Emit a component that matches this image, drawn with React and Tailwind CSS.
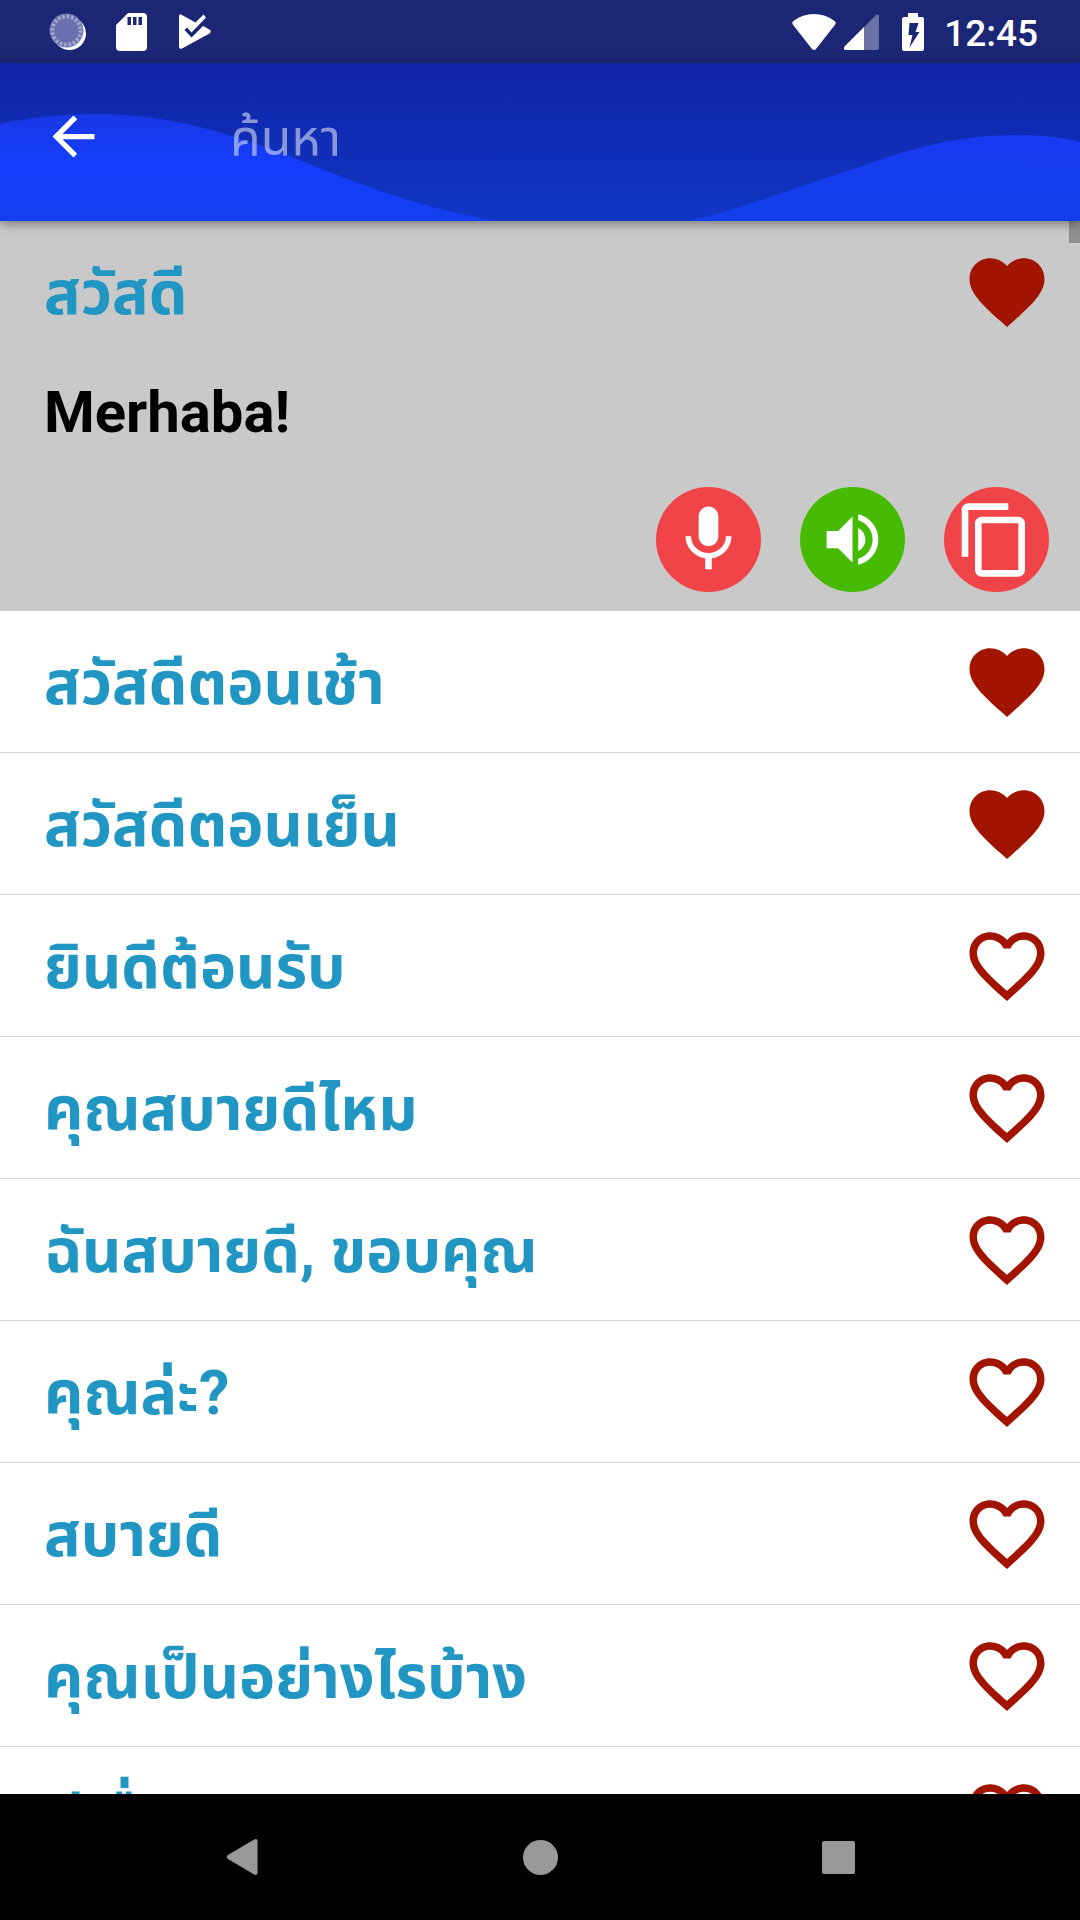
import React, { useState } from "react";

const PHRASES = [
  { text: "สวัสดีตอนเช้า", liked: true },
  { text: "สวัสดีตอนเย็น", liked: true },
  { text: "ยินดีต้อนรับ", liked: false },
  { text: "คุณสบายดีไหม", liked: false },
  { text: "ฉันสบายดี, ขอบคุณ", liked: false },
  { text: "คุณล่ะ?", liked: false },
  { text: "สบายดี", liked: false },
  { text: "คุณเป็นอย่างไรบ้าง", liked: false },
  { text: "มีเรื่อง", liked: false },
];

const HEART =
  "M12 21.35l-1.45-1.32C5.4 15.36 2 12.28 2 8.5 2 5.42 4.42 3 7.5 3c1.74 0 3.41.81 4.5 2.09C13.09 3.81 14.76 3 16.5 3 19.58 3 22 5.42 22 8.5c0 3.78-3.4 6.86-8.55 11.54L12 21.35z";
const HEART_OUTLINE =
  "M16.5 3c-1.74 0-3.41.81-4.5 2.09C10.91 3.81 9.24 3 7.5 3 4.42 3 2 5.42 2 8.5c0 3.78 3.4 6.86 8.55 11.54L12 21.35l1.45-1.32C18.6 15.36 22 12.28 22 8.5 22 5.42 19.58 3 16.5 3zm-4.4 15.55l-.1.1-.1-.1C7.14 14.24 4 11.39 4 8.5 4 6.5 5.5 5 7.5 5c1.54 0 3.04.99 3.57 2.36h1.87C13.46 5.99 14.96 5 16.5 5c2 0 3.5 1.5 3.5 3.5 0 2.89-3.14 5.74-7.9 10.05z";
const MIC =
  "M12 14c1.66 0 2.99-1.34 2.99-3L15 5c0-1.66-1.34-3-3-3S9 3.34 9 5v6c0 1.66 1.34 3 3 3zm5.3-3c0 3-2.54 5.1-5.3 5.1S6.7 14 6.7 11H5c0 3.41 2.72 6.23 6 6.72V21h2v-3.28c3.28-.48 6-3.3 6-6.72h-1.7z";
const VOLUME =
  "M3 9v6h4l5 5V4L7 9H3zm13.5 3c0-1.77-1.02-3.29-2.5-4.03v8.05c1.48-.73 2.5-2.25 2.5-4.02zM14 3.23v2.06c2.89.86 5 3.54 5 6.71s-2.11 5.85-5 6.71v2.06c4.01-.91 7-4.49 7-8.77s-2.99-7.86-7-8.77z";
const COPY =
  "M16 1H4c-1.1 0-2 .9-2 2v14h2V3h12V1zm3 4H8c-1.1 0-2 .9-2 2v14c0 1.1.9 2 2 2h11c1.1 0 2-.9 2-2V7c0-1.1-.9-2-2-2zm0 16H8V7h11v14z";
const ARROW_BACK = "M20 11H7.83l5.59-5.59L12 4l-8 8 8 8 1.41-1.41L7.83 13H20v-2z";

function Icon({ d, className }) {
  return (
    <svg viewBox="0 0 24 24" fill="currentColor" className={className} aria-hidden="true">
      <path d={d} />
    </svg>
  );
}

function StatusBar() {
  return (
    <div className="flex h-[63px] shrink-0 items-center justify-between bg-[#1b2675] pr-[42px] pl-[49px] text-white">
      <div className="flex items-center">
        <svg viewBox="0 0 38 38" className="h-[38px] w-[38px]" aria-hidden="true">
          <circle cx="20.500" cy="20.500" r="16.500" fill="#fff" />
          <circle cx="17.500" cy="17.500" r="17" fill="#7379b3" />
          <circle cx="17.500" cy="17.500" r="14" fill="none" stroke="#a9add2" strokeWidth="4" strokeDasharray="2 2.4" />
          <circle cx="17.500" cy="17.500" r="12" fill="#6a70ae" />
        </svg>
        <svg viewBox="0 0 31 38" className="ml-[29px] h-[38px] w-[31px]" aria-hidden="true">
          <path
            fill="#fff"
            fillRule="evenodd"
            d="M12 0H27a4 4 0 0 1 4 4V34a4 4 0 0 1-4 4H4a4 4 0 0 1-4-4V12zM11.500 4v8h3.500V4zM17 4v8h3.500V4zM22.500 4v8H26V4z"
          />
        </svg>
        <svg viewBox="0 0 32 35" className="ml-8 h-[35px] w-8" aria-hidden="true">
          <path
            fill="#fff"
            d="M0 2Q0-.5 2.500.700L16.500 8.500 24.500.500 27 3.500 12.500 18.500 8 13.500 5.500 16 12.500 23.500 24 12 30.500 15.500Q33 17.500 30.500 19.500L3 34.500Q0 35.500 0 33z"
          />
        </svg>
      </div>
      <div className="flex items-center">
        <svg viewBox="0 0 44 36" className="h-9 w-11" aria-hidden="true">
          <path fill="#fff" d="M.8 10.500Q-.5 8.500 1.500 7Q10.500 0 22 0T42.500 7Q44.500 8.500 43.200 10.500L24 35Q22 37 20 35z" />
        </svg>
        <svg viewBox="0 0 35 36" className="ml-2 h-9 w-[35px]" aria-hidden="true">
          <path fill="#fff" opacity=".35" d="M20 13L32 1Q35-.5 35 2V34Q35 36 33 36H20z" />
          <path fill="#fff" d="M20 13V36H2Q-1 36 .5 32.500z" />
        </svg>
        <svg viewBox="0 0 22 38" className="ml-[23px] h-[38px] w-[22px]" aria-hidden="true">
          <path
            fill="#fff"
            fillRule="evenodd"
            d="M6 0H16V4H20Q22 4 22 6V36Q22 38 20 38H2Q0 38 0 36V6Q0 4 2 4H6zM7.500 10L6.500 22H10.500L7.500 34.500 17.500 19H13.500L16.500 10z"
          />
        </svg>
        <span className="ml-5 pt-1 text-[37px] leading-none font-medium">12:45</span>
      </div>
    </div>
  );
}

function Header() {
  return (
    <header className="relative z-10 shrink-0 bg-linear-to-b from-[#1024a6] to-[#1036c4] pb-[11px] shadow-[0_3px_10px_rgba(0,0,0,0.4)]">
      <svg
        viewBox="0 0 1080 158"
        preserveAspectRatio="none"
        className="absolute inset-0 h-full w-full"
        aria-hidden="true"
      >
        <defs>
          <linearGradient id="waveLeft" x1="0" y1="0" x2="0" y2="1">
            <stop offset="0" stopColor="#1838e4" />
            <stop offset="0.5" stopColor="#153dfc" />
            <stop offset="1" stopColor="#133fee" />
          </linearGradient>
          <linearGradient id="waveRight" x1="0" y1="0" x2="0" y2="1">
            <stop offset="0" stopColor="#183af2" />
            <stop offset="1" stopColor="#113fe6" />
          </linearGradient>
        </defs>
        <path fill="url(#waveLeft)" d="M0 61C30 54 65 51 100 51C165 52 215 65 289 93C350 117 410 143 496 158H0z" />
        <path fill="url(#waveRight)" d="M688 158C760 141 800 122 860 104C915 83 965 72 1019 72C1042 72 1060 74 1080 79V158z" />
      </svg>
      <div className="relative flex h-[147px] items-center pl-[42px]">
        <button type="button" aria-label="Back" className="text-white">
          <Icon d={ARROW_BACK} className="h-[63px] w-[63px]" />
        </button>
        <input
          type="search"
          aria-label="ค้นหา"
          placeholder="ค้นหา"
          className="ml-[125px] min-w-0 flex-1 bg-transparent pt-1 text-[50px] text-white outline-none placeholder:text-white/50"
        />
      </div>
    </header>
  );
}

function PhraseRow({ text, initial }) {
  const [liked, setLiked] = useState(initial);
  return (
    <div className="flex h-[141px] items-center justify-between pr-7 pl-11">
      <p className="pt-1 text-[61px] leading-none font-bold text-[#2196c3]">{text}</p>
      <button
        type="button"
        aria-label="Favorite"
        aria-pressed={liked}
        onClick={() => setLiked(!liked)}
        className="shrink-0 text-[#a01400]"
      >
        <Icon d={liked ? HEART : HEART_OUTLINE} className="h-[90px] w-[90px]" />
      </button>
    </div>
  );
}

function RoundButton({ label, d, color, size }) {
  return (
    <button
      type="button"
      aria-label={label}
      className={`flex h-[105px] w-[105px] items-center justify-center rounded-full text-white ${color}`}
    >
      <Icon d={d} className={size} />
    </button>
  );
}

function NavBar() {
  return (
    <nav className="flex h-[126px] shrink-0 items-center justify-center gap-[234px] bg-black text-[#999]">
      <button type="button" aria-label="Back" className="flex w-16 justify-center">
        <svg viewBox="0 0 32 37" className="h-9 w-8" fill="currentColor" aria-hidden="true">
          <path d="M28.500.500Q32-1 32 2.500V34.500Q32 38 28.500 36.500L1.500 20.500Q-1 18.500 1.500 16.500z" />
        </svg>
      </button>
      <button type="button" aria-label="Home" className="flex w-16 justify-center">
        <span className="h-[35px] w-[35px] rounded-full bg-[#999]" />
      </button>
      <button type="button" aria-label="Recents" className="flex w-16 justify-center">
        <span className="h-[33px] w-[33px] rounded-xs bg-[#999]" />
      </button>
    </nav>
  );
}

export default function App() {
  return (
    <div className="flex h-screen flex-col overflow-hidden bg-white font-[Roboto,'Noto_Sans_Thai','Noto_Sans',sans-serif]">
      <StatusBar />
      <Header />
      <main className="relative min-h-0 flex-1 overflow-hidden">
        <span className="absolute top-0 right-0 h-[22px] w-[11px] bg-[#909090]" />
        <ul>
          <li className="border-b border-[#d0d0d0] bg-[#c9c9c9]">
            <PhraseRow text="สวัสดี" initial />
            <p className="pt-4 pl-11 text-[58px] leading-[68px] font-bold text-black">Merhaba!</p>
            <div className="flex justify-end gap-[39px] pt-[41px] pr-[31px] pb-[18px]">
              <RoundButton label="Record" d={MIC} color="bg-[#f04448]" size="h-[79px] w-[79px]" />
              <RoundButton label="Listen" d={VOLUME} color="bg-[#47bb04]" size="h-[69px] w-[69px]" />
              <RoundButton label="Copy" d={COPY} color="bg-[#f04448] pr-1" size="h-20 w-20" />
            </div>
          </li>
          {PHRASES.map((phrase) => (
            <li key={phrase.text} className="border-b border-[#d6d6d6]">
              <PhraseRow text={phrase.text} initial={phrase.liked} />
            </li>
          ))}
        </ul>
      </main>
      <NavBar />
    </div>
  );
}
